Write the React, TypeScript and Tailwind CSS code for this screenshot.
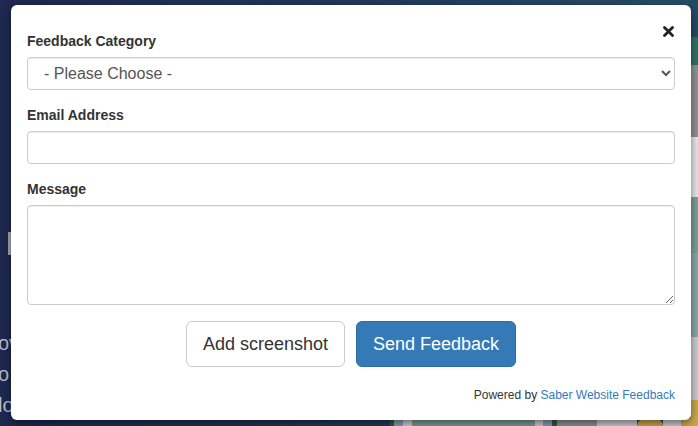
const font = { fontFamily: '"Liberation Sans", Arial, sans-serif' }

const Field = ({ label, children }: { label: string; children: React.ReactNode }) => (
  <div className="mb-[15px]">
    <label className="mb-[6px] block text-[14px] leading-[20px] font-bold text-[#333]">{label}</label>
    {children}
  </div>
)

const inputCls =
  "block w-full rounded-[4px] border border-[#ccc] bg-white px-3 text-[16px] text-[#555] shadow-[inset_0_1px_1px_rgba(0,0,0,0.075)] outline-none"

export default function App() {
  return (
    <div className="relative h-[426px] w-[698px] overflow-hidden bg-gradient-to-r from-[#1e2850] via-[#22385a] to-[#264e66] pt-[5px] pl-[11px]" style={font}>
      {/* page behind the overlay */}
      <div className="absolute top-[232px] left-[8px] h-[23px] w-[4px] bg-[#a7abb3]" />
      <div className="absolute top-[328px] left-[-2px] text-[20px] leading-[31px] text-[#b9bfcc]">
        <div>ov</div>
        <div>o</div>
        <div>lo</div>
      </div>
      <div className="absolute top-0 right-0 flex h-full w-[8px] flex-col">
        <div className="h-[37px] bg-[#254b62]" />
        <div className="h-[28px] bg-[#2f7068]" />
        <div className="h-[72px] bg-[#8e9295]" />
        <div className="h-[60px] bg-[#e6e7e8]" />
        <div className="h-[56px] bg-[#7f9d99]" />
        <div className="h-[84px] bg-[#8aa6a3]" />
        <div className="h-[63px] bg-[#c8ccd0]" />
        <div className="flex-1 bg-[#c8a64a]" />
      </div>
      <div className="absolute bottom-0 left-[390px] flex h-[7px] w-[308px]">
        <div className="w-[4px] bg-[#2f5a45]" />
        <div className="w-[9px] bg-[#8c9cb0]" />
        <div className="w-[9px] bg-[#c9cdd0]" />
        <div className="w-[123px] bg-[#7e9994]" />
        <div className="w-[8px] bg-[#c9cdd0]" />
        <div className="w-[9px] bg-[#8c9cb0]" />
        <div className="w-[5px] bg-[#2f5a45]" />
        <div className="w-[40px] bg-[#8e9295]" />
        <div className="w-[40px] bg-[#c8ccd0]" />
        <div className="w-[26px] rounded-t-full bg-[#c8a64a]" />
        <div className="w-[18px] bg-[#c8ccd0]" />
        <div className="flex-1 bg-[#c8a64a]" />
      </div>

      {/* modal */}
      <div className="relative w-[680px] rounded-[6px] bg-white px-4 pt-[26px] pb-[16px] shadow-[0_3px_9px_rgba(0,0,0,0.5)]">
        <button type="button" className="absolute top-[21px] right-[17px] h-[11px] w-[11px]">
          <svg viewBox="0 0 11 11" className="h-[11px] w-[11px]">
            <path d="M1.5 1.5 L9.5 9.5 M9.5 1.5 L1.5 9.5" stroke="#222" strokeWidth="2.8" strokeLinecap="round" />
          </svg>
        </button>

        <Field label="Feedback Category">
          <select className={`${inputCls} h-[33px]`} defaultValue="">
            <option value="">- Please Choose -</option>
          </select>
        </Field>

        <Field label="Email Address">
          <input type="email" className={`${inputCls} h-[33px]`} />
        </Field>

        <Field label="Message">
          <textarea className={`${inputCls} h-[100px] py-[6px]`} />
        </Field>

        <div className="mt-[16px] flex justify-center gap-[11px]">
          <button
            type="button"
            className="h-[46px] rounded-[6px] border border-[#ccc] bg-white px-4 text-[18px] text-[#333]"
          >
            Add screenshot
          </button>
          <button
            type="button"
            className="h-[46px] rounded-[6px] border border-[#2e6da4] bg-[#337ab7] px-4 text-[18px] text-white"
          >
            Send Feedback
          </button>
        </div>

        <p className="mt-[20px] text-right text-[12px] leading-[17px] text-[#333]">
          Powered by <a className="text-[#337ab7]">Saber Website Feedback</a>
        </p>
      </div>
    </div>
  )
}
